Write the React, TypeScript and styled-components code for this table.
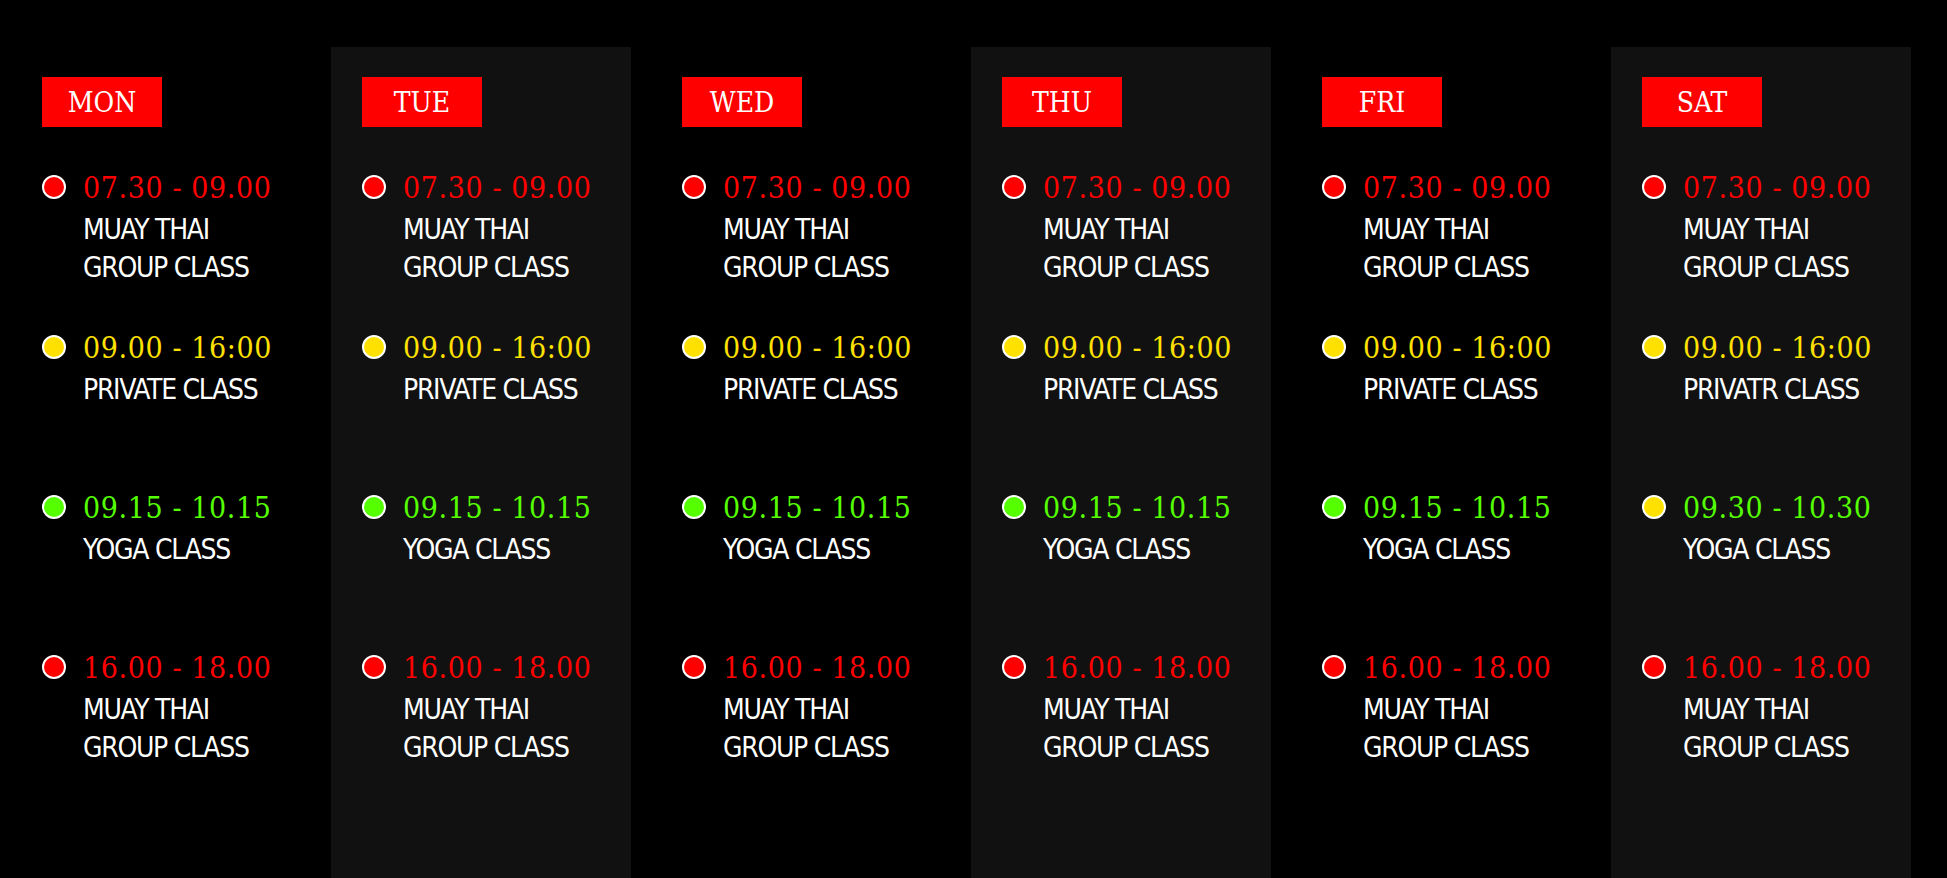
import React from 'react';
import styled, { createGlobalStyle } from 'styled-components';

const RED = '#ff0000';
const YELLOW = '#ffe100';
const GREEN = '#55ff00';

const GlobalStyle = createGlobalStyle`
    html, body {
        margin: 0;
        padding: 0;
        background: #000;
        overflow: hidden;
    }
`;

const Schedule = styled.div`
    display: grid;
    grid-template-columns: repeat(6, 300px);
    column-gap: 20px;
    padding: 47px 0 0 11px;
    min-height: 878px;
    box-sizing: border-box;
    background: #000;
`;

const DayColumn = styled.div<{ $shaded: boolean }>`
    background: ${p => (p.$shaded ? '#111111' : 'transparent')};
    padding: 30px 0 0 31px;
    min-height: 831px;
    box-sizing: border-box;
`;

const DayTag = styled.div`
    width: 120px;
    height: 50px;
    background: ${RED};
    color: #fff;
    display: flex;
    align-items: center;
    justify-content: center;
    font-family: "DejaVu Serif Condensed", "DejaVu Serif", serif;
    font-stretch: condensed;
    font-size: 28px;
`;

const SessionList = styled.div`
    margin-top: 42px;
    display: grid;
    grid-auto-rows: 160px;
`;

const Session = styled.div`
    display: grid;
    grid-template-columns: 24px 1fr;
    column-gap: 17px;
    align-content: start;
`;

const Dot = styled.span<{ $color: string }>`
    width: 24px;
    height: 24px;
    margin-top: 6px;
    border-radius: 50%;
    border: 2px solid #fff;
    box-sizing: border-box;
    background: ${p => p.$color};
`;

const Time = styled.div<{ $color: string }>`
    color: ${p => p.$color};
    font-family: "DejaVu Serif Condensed", "DejaVu Serif", serif;
    font-stretch: condensed;
    font-size: 30px;
    line-height: 36px;
    letter-spacing: 0.6px;
    margin-top: 1px;
    white-space: nowrap;
`;

const ClassName = styled.div`
    grid-column: 2;
    margin-top: 5px;
    color: #fff;
    font-family: "DejaVu Sans Condensed", "DejaVu Sans", sans-serif;
    font-stretch: condensed;
    font-size: 28px;
    line-height: 38px;
    letter-spacing: -1.3px;
    white-space: nowrap;
`;

type Item = { time: string; timeColor: string; dot: string; lines: string[] };

const muayMorning: Item = { time: '07.30 - 09.00', timeColor: RED, dot: RED, lines: ['MUAY THAI', 'GROUP CLASS'] };
const privateClass: Item = { time: '09.00 - 16:00', timeColor: YELLOW, dot: YELLOW, lines: ['PRIVATE CLASS'] };
const yoga: Item = { time: '09.15 - 10.15', timeColor: GREEN, dot: GREEN, lines: ['YOGA CLASS'] };
const muayEvening: Item = { time: '16.00 - 18.00', timeColor: RED, dot: RED, lines: ['MUAY THAI', 'GROUP CLASS'] };

const weekdays = ['MON', 'TUE', 'WED', 'THU', 'FRI'].map(day => ({
    day,
    items: [muayMorning, privateClass, yoga, muayEvening],
}));

const days = [
    ...weekdays,
    {
        day: 'SAT',
        items: [
            muayMorning,
            { ...privateClass, lines: ['PRIVATR CLASS'] },
            { time: '09.30 - 10.30', timeColor: GREEN, dot: YELLOW, lines: ['YOGA CLASS'] },
            muayEvening,
        ],
    },
];

const App = () => {
    return <>
        <GlobalStyle />
        <Schedule>
            {days.map((d, i) => (
                <DayColumn key={d.day} $shaded={i % 2 === 1}>
                    <DayTag>{d.day}</DayTag>
                    <SessionList>
                        {d.items.map((item, j) => (
                            <Session key={j}>
                                <Dot $color={item.dot} />
                                <Time $color={item.timeColor}>{item.time}</Time>
                                <ClassName>
                                    {item.lines.map(l => <div key={l}>{l}</div>)}
                                </ClassName>
                            </Session>
                        ))}
                    </SessionList>
                </DayColumn>
            ))}
        </Schedule>
    </>
}

export default App;
